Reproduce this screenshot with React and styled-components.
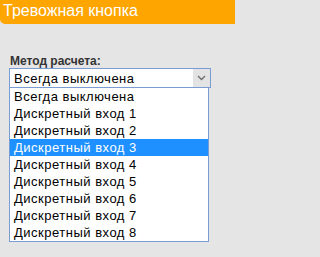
import React from "react";
import styled, { createGlobalStyle } from "styled-components";

const Global = createGlobalStyle`
  html, body { margin: 0; padding: 0; background: #e5e5e5; }
  body { font-family: "Liberation Sans", Arial, sans-serif; }
`;

const Page = styled.div`
  width: 235px;
  height: 257px;
  background: #e5e5e5;
  overflow: hidden;
`;

const Header = styled.div`
  height: 24px;
  background: #ffa500;
  border-bottom-left-radius: 5px;
  color: #fff;
  font-size: 16px;
  line-height: 22px;
  padding-left: 3px;
`;

const Body = styled.div`
  padding: 31px 0 0 9px;
`;

const Label = styled.div`
  font-size: 12px;
  font-weight: bold;
  line-height: 13px;
  color: #333;
  padding-left: 1px;
`;

const Select = styled.div`
  width: 200px;
  height: 18px;
  box-sizing: content-box;
  border: 1px solid #7a9cd3;
  background: #fff;
  display: flex;
  align-items: center;
  font-size: 13px;
  letter-spacing: 0.5px;
  color: #000;
`;

const Value = styled.span`
  flex: 1;
  padding-left: 4px;
`;

const Arrow = styled.span`
  width: 17px;
  height: 18px;
  background: #e3e3e3;
  display: flex;
  align-items: center;
  justify-content: center;
`;

const List = styled.div`
  width: 198px;
  border: 1px solid #7a9cd3;
  border-top: none;
  background: #fff;
`;

const Option = styled.div`
  height: 17px;
  line-height: 17px;
  font-size: 13px;
  letter-spacing: 0.5px;
  padding-left: 4px;
  white-space: nowrap;
  color: ${(p) => (p.$active ? "#fff" : "#000")};
  background: ${(p) => (p.$active ? "#1e90ff" : "transparent")};
`;

const options = [
  "Всегда выключена",
  "Дискретный вход 1",
  "Дискретный вход 2",
  "Дискретный вход 3",
  "Дискретный вход 4",
  "Дискретный вход 5",
  "Дискретный вход 6",
  "Дискретный вход 7",
  "Дискретный вход 8",
];

export default function App() {
  return (
    <Page>
      <Global />
      <Header>Тревожная кнопка</Header>
      <Body>
        <Label>Метод расчета:</Label>
        <Select>
          <Value>Всегда выключена</Value>
          <Arrow>
            <svg width="9" height="6" viewBox="0 0 9 6">
              <path d="M1 1 L4.5 4.5 L8 1" fill="none" stroke="#6b6b6b" strokeWidth="1.3" />
            </svg>
          </Arrow>
        </Select>
        <List>
          {options.map((o, i) => (
            <Option key={o} $active={i === 3}>
              {o}
            </Option>
          ))}
        </List>
      </Body>
    </Page>
  );
}
